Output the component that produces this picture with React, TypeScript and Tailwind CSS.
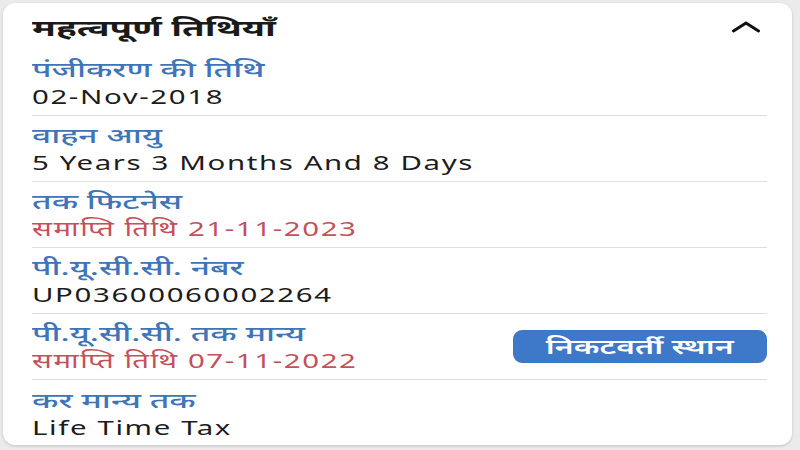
import type { ReactNode } from 'react';

type Row = {
  label: string;
  value: string;
  expired?: boolean;
  action?: string;
};

const rows: Row[] = [
  { label: 'पंजीकरण की तिथि', value: '02-Nov-2018' },
  { label: 'वाहन आयु', value: '5 Years 3 Months And 8 Days' },
  { label: 'तक फिटनेस', value: 'समाप्ति तिथि 21-11-2023', expired: true },
  { label: 'पी.यू.सी.सी. नंबर', value: 'UP03600060002264' },
  { label: 'पी.यू.सी.सी. तक मान्य', value: 'समाप्ति तिथि 07-11-2022', expired: true, action: 'निकटवर्ती स्थान' },
  { label: 'कर मान्य तक', value: 'Life Time Tax' },
];

const font = { fontFamily: '"Noto Sans", "Noto Sans Devanagari", Roboto, sans-serif' };

// the app's text is rendered wide; stretch each line from its left edge
function Wide({ children, className = 'scale-x-[1.6]' }: { children: ReactNode; className?: string }) {
  return <span className={`inline-block whitespace-nowrap origin-left ${className}`}>{children}</span>;
}

export default function App() {
  return (
    <div className="w-[800px] h-[450px] bg-[#ebebeb] p-[3px] pr-[8px] pb-[5px]" style={font}>
      <div className="h-full bg-white rounded-[12px] shadow-[0_1px_3px_rgba(0,0,0,0.18)] pl-[29px] pr-[25px] pt-[1px]">
        {/* Header */}
        <div className="flex items-center justify-between h-[46px]">
          <h2 className="text-[22px] font-bold text-[#1a1a1a] leading-none">
            <Wide className="scale-x-[1.67]">महत्वपूर्ण तिथियाँ</Wide>
          </h2>
          <svg width="28" height="12" viewBox="0 0 28 12" className="mr-[7px]" fill="none">
            <polyline points="1.5,10 14,2 26.5,10" stroke="#111" strokeWidth="3" strokeLinecap="round" strokeLinejoin="round" />
          </svg>
        </div>

        {/* Rows */}
        <div className="flex flex-col">
          {rows.map((row, i) => (
            <div
              key={row.label}
              className={`flex items-center justify-between h-[66px] ${
                i < rows.length - 1 ? 'border-b border-[#dedede]' : ''
              }`}
            >
              <div className="flex flex-col gap-[2px] pt-[1px]">
                <span className="text-[20px] leading-[25px] font-medium text-[#3f74b8]">
                  <Wide className="scale-x-[1.68]">{row.label}</Wide>
                </span>
                <span
                  className={`text-[20px] leading-[25px] tracking-[1.1px] ${
                    row.expired ? 'text-[#c4505a]' : 'text-[#1c1c1c]'
                  }`}
                >
                  <Wide className="scale-x-[1.47]">{row.value}</Wide>
                </span>
              </div>
              {row.action && (
                <button className="bg-[#3d78c9] text-white rounded-[9px] w-[254px] h-[33px] text-[20px] font-semibold leading-none flex items-center justify-center">
                  <span className="inline-block whitespace-nowrap scale-x-[1.6]">{row.action}</span>
                </button>
              )}
            </div>
          ))}
        </div>
      </div>
    </div>
  );
}
